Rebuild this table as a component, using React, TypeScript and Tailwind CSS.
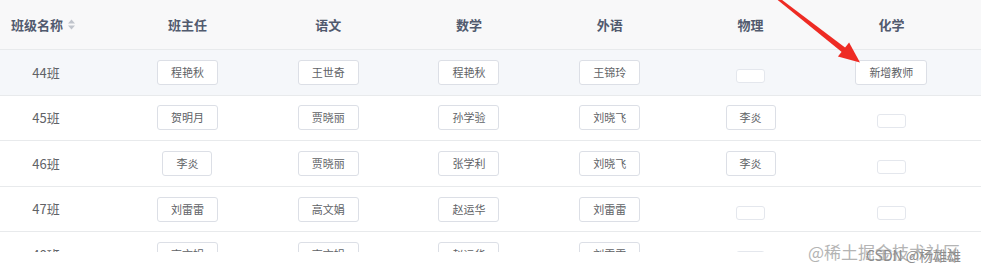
const cols = ["班主任", "语文", "数学", "外语", "物理", "化学"];

const rows: { name: string; teachers: string[] }[] = [
  { name: "44班", teachers: ["程艳秋", "王世奇", "程艳秋", "王锦玲", "", "新增教师"] },
  { name: "45班", teachers: ["贺明月", "贾晓丽", "孙学验", "刘晓飞", "李炎", ""] },
  { name: "46班", teachers: ["李炎", "贾晓丽", "张学利", "刘晓飞", "李炎", ""] },
  { name: "47班", teachers: ["刘雷雷", "高文娟", "赵运华", "刘雷雷", "", ""] },
  { name: "48班", teachers: ["高文娟", "高文娟", "赵运华", "刘雷雷", "", ""] },
];

const grid = "grid grid-cols-[117px_repeat(6,140.8px)_1fr]";

function TeacherButton({ label }: { label: string }) {
  if (!label) {
    return (
      <span className="mt-[7px] inline-block h-[14px] w-[29px] rounded-[3px] border border-[#e4e7ed] bg-white" />
    );
  }
  return (
    <span className="inline-flex items-center rounded-[3px] border border-[#dcdfe6] bg-white px-[13px] py-[6px] text-[11px] leading-[11px] text-[#606266]">
      {label}
    </span>
  );
}

function SortIcon() {
  return (
    <svg width="9" height="11" viewBox="0 0 9 11" className="ml-[4px]">
      <path d="M4.5 0.5 L8 4.5 L1 4.5 Z" fill="#c0c4cc" />
      <path d="M4.5 10.5 L8 6.5 L1 6.5 Z" fill="#c0c4cc" />
    </svg>
  );
}

export default function App() {
  return (
    <div
      className="relative h-[278px] w-[981px] overflow-hidden bg-white"
      style={{ fontFamily: '"Noto Sans CJK SC", "Noto Sans", sans-serif' }}
    >
      <div className="h-[252px] overflow-hidden">
        {/* header */}
        <div className={`${grid} h-[50px] border-b border-[#e8eaec] bg-[#f8f8f9] text-[13px] font-bold text-[#515a6e]`}>
          <div className="flex items-center pl-[11px]">
            班级名称
            <SortIcon />
          </div>
          {cols.map((c) => (
            <div key={c} className="flex items-center justify-center">
              {c}
            </div>
          ))}
          <div />
        </div>

        {rows.map((r, i) => (
          <div
            key={r.name}
            className={`${grid} h-[45.6px] border-b border-[#e8eaec] ${i === 0 ? "bg-[#f5f7fa]" : "bg-white"}`}
          >
            <div className="flex w-[92px] items-center justify-center text-[13px] text-[#606266]">{r.name}</div>
            {r.teachers.map((t, j) => (
              <div key={j} className="flex items-center justify-center">
                <TeacherButton label={t} />
              </div>
            ))}
            <div />
          </div>
        ))}
      </div>

      {/* red pointer arrow */}
      <svg
        className="pointer-events-none absolute left-0 top-0"
        width="981"
        height="278"
        viewBox="0 0 981 278"
      >
        <polygon points="775.2,-2 776.8,-4 846.7,48.8 843.3,53.2" fill="#ee2b24" />
        <polygon points="860,62.5 837.9,56.6 849.1,42.4" fill="#ee2b24" />
      </svg>

      {/* watermark */}
      <span className="pointer-events-none absolute left-[808px] top-[240px] whitespace-nowrap text-[17px] leading-[24px] text-[#b4b4b4]">
        @稀土掘金技术社区
      </span>
      <span className="pointer-events-none absolute left-[866px] top-[246px] whitespace-nowrap text-[14px] leading-[18px] text-[#8c8c8c]">
        CSDN @杨雄雄
      </span>
    </div>
  );
}
